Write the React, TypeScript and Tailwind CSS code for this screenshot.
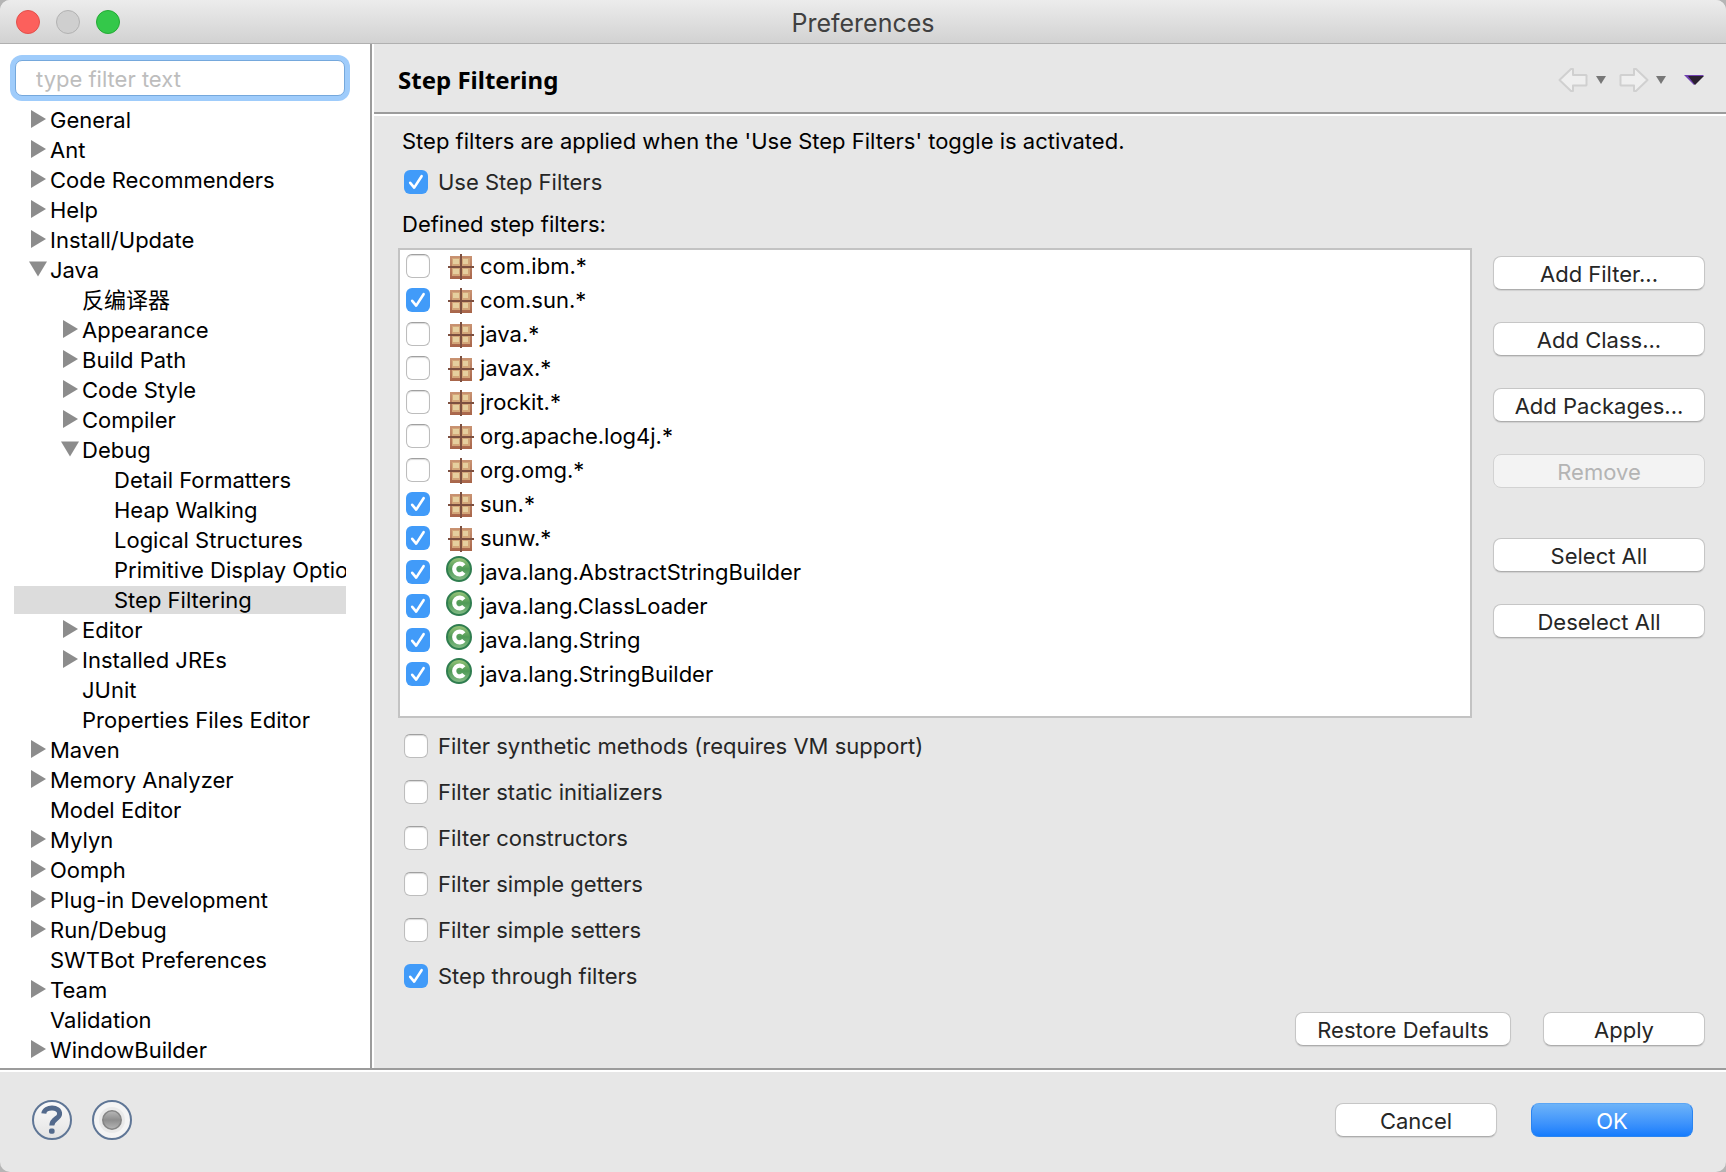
import { useState } from "react";
import { clsx } from "clsx";

type TreeNode = { label: string; level: number; state?: "open" | "closed" };

const tree: TreeNode[] = [
  { label: "General", level: 0, state: "closed" },
  { label: "Ant", level: 0, state: "closed" },
  { label: "Code Recommenders", level: 0, state: "closed" },
  { label: "Help", level: 0, state: "closed" },
  { label: "Install/Update", level: 0, state: "closed" },
  { label: "Java", level: 0, state: "open" },
  { label: "反编译器", level: 1 },
  { label: "Appearance", level: 1, state: "closed" },
  { label: "Build Path", level: 1, state: "closed" },
  { label: "Code Style", level: 1, state: "closed" },
  { label: "Compiler", level: 1, state: "closed" },
  { label: "Debug", level: 1, state: "open" },
  { label: "Detail Formatters", level: 2 },
  { label: "Heap Walking", level: 2 },
  { label: "Logical Structures", level: 2 },
  { label: "Primitive Display Options", level: 2 },
  { label: "Step Filtering", level: 2 },
  { label: "Editor", level: 1, state: "closed" },
  { label: "Installed JREs", level: 1, state: "closed" },
  { label: "JUnit", level: 1 },
  { label: "Properties Files Editor", level: 1 },
  { label: "Maven", level: 0, state: "closed" },
  { label: "Memory Analyzer", level: 0, state: "closed" },
  { label: "Model Editor", level: 0 },
  { label: "Mylyn", level: 0, state: "closed" },
  { label: "Oomph", level: 0, state: "closed" },
  { label: "Plug-in Development", level: 0, state: "closed" },
  { label: "Run/Debug", level: 0, state: "closed" },
  { label: "SWTBot Preferences", level: 0 },
  { label: "Team", level: 0, state: "closed" },
  { label: "Validation", level: 0 },
  { label: "WindowBuilder", level: 0, state: "closed" },
];

const filters = [
  { name: "com.ibm.*", kind: "package", on: false },
  { name: "com.sun.*", kind: "package", on: true },
  { name: "java.*", kind: "package", on: false },
  { name: "javax.*", kind: "package", on: false },
  { name: "jrockit.*", kind: "package", on: false },
  { name: "org.apache.log4j.*", kind: "package", on: false },
  { name: "org.omg.*", kind: "package", on: false },
  { name: "sun.*", kind: "package", on: true },
  { name: "sunw.*", kind: "package", on: true },
  { name: "java.lang.AbstractStringBuilder", kind: "class", on: true },
  { name: "java.lang.ClassLoader", kind: "class", on: true },
  { name: "java.lang.String", kind: "class", on: true },
  { name: "java.lang.StringBuilder", kind: "class", on: true },
];

const options = [
  { name: "Filter synthetic methods (requires VM support)", on: false },
  { name: "Filter static initializers", on: false },
  { name: "Filter constructors", on: false },
  { name: "Filter simple getters", on: false },
  { name: "Filter simple setters", on: false },
  { name: "Step through filters", on: true },
];

function Check({ initial }: { initial: boolean }) {
  const [on, setOn] = useState(initial);
  return (
    <span className="grid size-6 shrink-0">
      <input
        type="checkbox"
        checked={on}
        onChange={() => setOn(!on)}
        className="col-start-1 row-start-1 size-6 appearance-none rounded-[6px] border border-[#bdbdbd] border-t-[#a0a0a0] bg-white shadow-[inset_0_1px_1px_rgba(0,0,0,0.15)] checked:border-0 checked:bg-[#419bf9] checked:shadow-none"
      />
      {on && (
        <svg viewBox="0 0 24 24" className="pointer-events-none col-start-1 row-start-1 size-6" aria-hidden="true">
          <path d="M6.2 12.8 L10.2 17.6 L17.6 6.2" fill="none" stroke="#fff" strokeWidth="2.6" strokeLinecap="round" strokeLinejoin="round" />
        </svg>
      )}
    </span>
  );
}

function PackageIcon() {
  return (
    <svg viewBox="0 0 26 26" className="size-[26px]" aria-hidden="true">
      <defs>
        <linearGradient id="crate" x1="0" y1="0" x2="0" y2="1">
          <stop offset="0" stopColor="#c99372" />
          <stop offset="1" stopColor="#a8654a" />
        </linearGradient>
      </defs>
      <rect x="2" y="2" width="22" height="23" fill="url(#crate)" />
      <g fill="#d3a679">
        <rect x="4" y="4" width="8" height="8" />
        <rect x="14" y="4" width="8" height="8" />
        <rect x="4" y="14" width="8" height="8" />
        <rect x="14" y="14" width="8" height="8" />
      </g>
      <g fill="#e6cf9e">
        <rect x="5" y="5" width="6" height="5" />
        <rect x="15" y="5" width="5" height="5" />
        <rect x="5" y="15" width="6" height="5" />
        <rect x="15" y="15" width="5" height="5" />
      </g>
      <path d="M12 0h2v26h-2zM0 12h26v2H0z" fill="#7d5040" />
    </svg>
  );
}

function ClassIcon() {
  return (
    <svg viewBox="0 0 26 26" className="size-[26px]" aria-hidden="true">
      <defs>
        <linearGradient id="classFill" x1="0" y1="0" x2="0" y2="1">
          <stop offset="0" stopColor="#9cc77b" />
          <stop offset="0.5" stopColor="#4f9a57" />
          <stop offset="1" stopColor="#86bd88" />
        </linearGradient>
      </defs>
      <circle cx="13" cy="13" r="12" fill="url(#classFill)" stroke="#2f7d4f" strokeWidth="2" />
      <path d="M17.8 9.6 A5.4 5.4 0 1 0 17.8 16.4" fill="none" stroke="#fff" strokeWidth="4.2" />
    </svg>
  );
}

function Disclosure({ state }: { state?: "open" | "closed" }) {
  return (
    <svg viewBox="0 0 18 18" className="mb-0.5 size-[18px] shrink-0" aria-hidden="true">
      {state === "closed" && <path d="M2 0 L17 9 L2 18z" fill="#8c8c8c" />}
      {state === "open" && <path d="M0 1.5 H18 L9 16.5z" fill="#8c8c8c" />}
    </svg>
  );
}

function PushButton({ children, disabled, primary, className }: { children: string; disabled?: boolean; primary?: boolean; className?: string }) {
  return (
    <button
      type="button"
      disabled={disabled}
      className={clsx(
        "h-[34px] rounded-[8px] border pt-0.5 text-center leading-[30px]",
        primary
          ? "border-[#2a84f0] border-t-[#5ba6f5] bg-linear-to-b from-[#6db3f8] to-[#147cfd] text-white"
          : disabled
            ? "border-[#d2d2d2] bg-[#f3f3f3] text-[#b4b4b4]"
            : "border-[#c6c6c6] border-b-[#adadad] bg-white text-[#262626] shadow-[0_1px_1px_rgba(0,0,0,0.1)]",
        className,
      )}
    >
      {children}
    </button>
  );
}

function NavArrow({ flip }: { flip?: boolean }) {
  return (
    <svg viewBox="0 0 30 24" className={clsx("h-6 w-[30px]", flip && "-scale-x-100")} aria-hidden="true">
      <path d="M1.5 12 L13 1 H15 V7 H28 L28.5 7.5 V17 L28 17.5 H15 V23 H13z" fill="#efefef" stroke="#d0d0d0" strokeWidth="2" strokeLinejoin="round" />
    </svg>
  );
}

function SmallCaret() {
  return (
    <svg viewBox="0 0 10 8" className="h-2 w-[10px]" aria-hidden="true">
      <path d="M0 0h10L5 8z" fill="#777" />
    </svg>
  );
}

export default function App() {
  return (
    <div className="min-h-screen bg-[#b5b5b5]">
      <div className="flex min-h-screen flex-col overflow-hidden rounded-[10px] bg-[#e7e7e7] font-[Inter,'Noto_Sans_CJK_SC',sans-serif] text-[22px] leading-7 text-black">
        <header className="grid h-11 grid-cols-[1fr_auto_1fr] items-center border-b border-[#b0b0b0] bg-linear-to-b from-[#ececec] to-[#d2d2d2] px-4">
          <div className="flex gap-4">
            <button type="button" aria-label="Close" className="size-6 rounded-full border border-[#e2504b] bg-[#fc605c]" />
            <button type="button" aria-label="Minimize" className="size-6 rounded-full border border-[#b2b2b2] bg-[#cfcfcf]" />
            <button type="button" aria-label="Zoom" className="size-6 rounded-full border border-[#24aa35] bg-[#34c84a]" />
          </div>
          <h1 className="pt-0.5 text-[25px] text-[#404040]">Preferences</h1>
        </header>

        <div className="flex flex-1">
          <aside className="w-[372px] shrink-0 border-r-2 border-[#9c9c9c] bg-white pr-6 pl-[14px] pt-4">
            <div className="px-px">
              <input
                type="text"
                aria-label="Filter"
                placeholder="type filter text"
                className="block h-9 w-full rounded-[7px] border border-[#75a8dc] bg-white px-5 pt-0.5 shadow-[0_0_0_5px_#9fccfb] outline-none placeholder:text-[#bdbdbd]"
              />
            </div>
            <ul className="flex flex-col gap-0.5 pt-[10px]">
              {tree.map((n) => (
                <li
                  key={n.label}
                  className={clsx(
                    "flex h-7 items-center gap-[3px] overflow-hidden whitespace-nowrap",
                    n.level === 0 && "pl-[15px]",
                    n.level === 1 && "pl-[47px]",
                    n.level === 2 && "pl-[79px]",
                    n.label === "Step Filtering" && "bg-[#dcdcdc]",
                  )}
                >
                  <Disclosure state={n.state} />
                  <span>{n.label}</span>
                </li>
              ))}
            </ul>
          </aside>

          <main className="flex min-w-0 flex-1 flex-col border-l-2 border-white">
            <div className="flex h-[70px] items-center justify-between border-b-2 border-[#9c9c9c] pt-1 pr-[22px] pl-6">
              <h2 className="font-['Noto_Sans',sans-serif] text-[24px] font-bold">Step Filtering</h2>
              <div className="flex items-center">
                <button type="button" aria-label="Back"><NavArrow /></button>
                <button type="button" aria-label="Back history" className="ml-2"><SmallCaret /></button>
                <button type="button" aria-label="Forward" className="ml-[13px]"><NavArrow flip /></button>
                <button type="button" aria-label="Forward history" className="ml-[7px]"><SmallCaret /></button>
                <button type="button" aria-label="View menu" className="ml-[18px]">
                  <svg viewBox="0 0 20 10" className="h-[10px] w-5" aria-hidden="true">
                    <path d="M0 0h20L10 10z" fill="#7040b0" />
                    <path d="M4 1h16L11 10z" fill="#2a2030" />
                  </svg>
                </button>
              </div>
            </div>

            <div className="flex flex-1 flex-col border-t-2 border-white pt-[11px] pr-[21px] pb-[22px] pl-6">
              <p className="pl-1">Step filters are applied when the 'Use Step Filters' toggle is activated.</p>
              <label className="mt-[13px] flex items-center gap-[10px] self-start pl-[6px] text-[#262626]">
                <Check initial />
                Use Step Filters
              </label>
              <p className="mt-[14px] pl-1">Defined step filters:</p>

              <div className="mt-[10px] flex items-start gap-[21px]">
                <ul className="flex min-w-0 flex-1 flex-col gap-0.5 border-2 border-[#c3c3c3] bg-white pb-[26px] pl-[6px]">
                  {filters.map((f) => (
                    <li key={f.name}>
                      <label className="flex h-8 items-center">
                        <Check initial={f.on} />
                        <span className={clsx("shrink-0", f.kind === "package" ? "ml-[18px] pt-0.5" : "ml-4 mr-0.5 pb-[6px]")}>
                          {f.kind === "package" ? <PackageIcon /> : <ClassIcon />}
                        </span>
                        <span className="ml-[6px]">{f.name}</span>
                      </label>
                    </li>
                  ))}
                </ul>
                <div className="flex w-[212px] shrink-0 flex-col gap-8 pt-2">
                  <PushButton>Add Filter...</PushButton>
                  <PushButton>Add Class...</PushButton>
                  <PushButton>Add Packages...</PushButton>
                  <PushButton disabled>Remove</PushButton>
                  <PushButton className="mt-[18px]">Select All</PushButton>
                  <PushButton>Deselect All</PushButton>
                </div>
              </div>

              <div className="mt-[14px] flex flex-col items-start gap-[18px] pl-[6px] text-[#262626]">
                {options.map((o) => (
                  <label key={o.name} className="flex items-center gap-[10px]">
                    <Check initial={o.on} />
                    {o.name}
                  </label>
                ))}
              </div>

              <div className="mt-auto flex justify-end gap-8 pt-4">
                <PushButton className="w-[216px]">Restore Defaults</PushButton>
                <PushButton className="w-[162px]">Apply</PushButton>
              </div>
            </div>
          </main>
        </div>

        <footer className="border-t-2 border-[#9c9c9c]">
          <div className="flex h-[102px] items-center justify-between border-t-2 border-white pr-[33px] pb-1 pl-8">
            <div className="flex gap-5">
              <button type="button" aria-label="Help">
                <svg viewBox="0 0 40 40" className="size-10" aria-hidden="true">
                  <defs>
                    <linearGradient id="disc" x1="0" y1="0" x2="0" y2="1">
                      <stop offset="0" stopColor="#fbfbfb" />
                      <stop offset="1" stopColor="#e3e3e3" />
                    </linearGradient>
                  </defs>
                  <circle cx="20" cy="20" r="19" fill="url(#disc)" stroke="#5f7696" strokeWidth="2" />
                  <path d="M11.8 13.5 C12.5 6 28 6 27.6 14 C27.4 19 20 18.5 19.8 25.5" fill="none" stroke="#536a8c" strokeWidth="5" />
                  <rect x="17" y="28.6" width="5.6" height="5.2" rx="1.8" fill="#536a8c" />
                </svg>
              </button>
              <button type="button" aria-label="Record">
                <svg viewBox="0 0 40 40" className="size-10" aria-hidden="true">
                  <defs>
                    <linearGradient id="dot" x1="0" y1="0" x2="0" y2="1">
                      <stop offset="0" stopColor="#b8b8b8" />
                      <stop offset="0.5" stopColor="#8e8e8e" />
                      <stop offset="1" stopColor="#b5b5b5" />
                    </linearGradient>
                  </defs>
                  <circle cx="20" cy="20" r="19" fill="#f4f4f4" stroke="#5f7696" strokeWidth="2" />
                  <circle cx="20" cy="20" r="13" fill="#e9e9e9" />
                  <circle cx="20" cy="20" r="9.2" fill="url(#dot)" stroke="#858585" strokeWidth="1.6" />
                </svg>
              </button>
            </div>
            <div className="flex gap-[34px]">
              <PushButton className="w-[162px]">Cancel</PushButton>
              <PushButton primary className="w-[162px]">OK</PushButton>
            </div>
          </div>
        </footer>
      </div>
    </div>
  );
}
